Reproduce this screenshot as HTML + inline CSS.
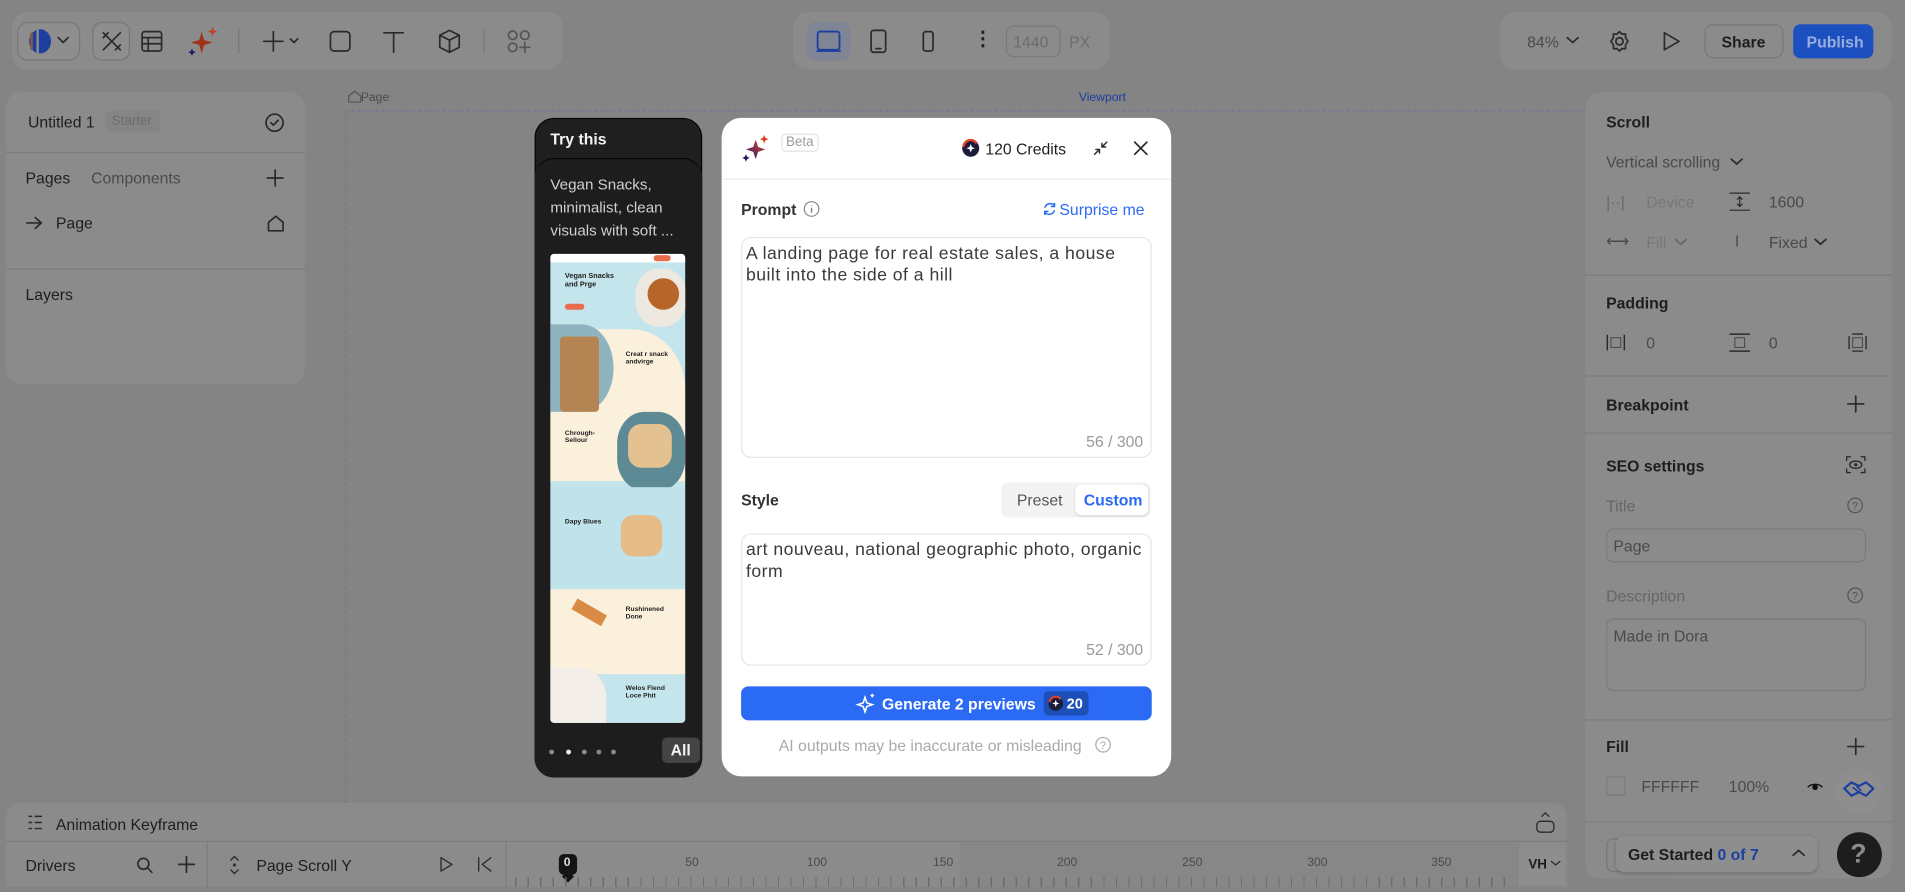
<!DOCTYPE html>
<html><head><meta charset="utf-8">
<style>
*{box-sizing:border-box;margin:0;padding:0}
html,body{width:1905px;height:892px;overflow:hidden;background:#848484;font-family:"Liberation Sans",sans-serif}
#w{position:absolute;left:0;top:0;width:1568px;height:734.2px;transform:scale(1.2149);transform-origin:0 0;background:#848484;color:#1e1e1e}
.a{position:absolute}
.pn{position:absolute;background:#8b8b8b;border-radius:12px}
.t{position:absolute;font-size:13px;white-space:nowrap}
.b{font-weight:bold}
.g{color:#4a4a4a}
.lg{color:#6c6c6c}
svg{position:absolute;overflow:visible}
.ic{fill:none;stroke:#2a2a2a;stroke-width:1.4;stroke-linecap:round;stroke-linejoin:round}
.ln{position:absolute;height:1px;background:#7c7c7c}
</style></head><body><div id="w">

<!-- top left toolbar -->
<div class="pn" style="left:10px;top:10px;width:453px;height:47px"></div>
<div class="a" style="left:14px;top:18px;width:52px;height:32px;border:1px solid #777;border-radius:9px;background:#8e8e8e"></div>
<svg style="left:22px;top:24px" width="22" height="20"><ellipse cx="11" cy="10" rx="9" ry="10" fill="#1c3fa0"/><rect x="8" y="0" width="2" height="20" fill="#8b8b8b"/><rect x="3" y="3" width="2" height="14" fill="#8b5a3a"/></svg>
<svg style="left:48px;top:31px" width="8" height="5"><path class="ic" d="M0 0l4 4 4-4"/></svg>
<div class="a" style="left:76px;top:18px;width:31px;height:32px;border:1px solid #777;border-radius:8px;background:#8e8e8e"></div>
<svg style="left:83px;top:25px" width="18" height="18"><path class="ic" d="M2 2l14 14M16 2L2 16M2 6l4-4M12 16l4-4"/></svg>
<svg style="left:116px;top:25px" width="18" height="18"><rect class="ic" x="1" y="1" width="16" height="16" rx="2"/><path class="ic" d="M1 6h16M1 11h16M6 6v11"/></svg>
<svg style="left:154px;top:22px" width="26" height="26"><path d="M12 4l2 7 7 2-7 2-2 7-2-7-7-2 7-2z" fill="#a0331a"/><path d="M21 0l1 3 3 1-3 1-1 3-1-3-3-1 3-1z" fill="#c04020"/><path d="M4 18l1 2 2 1-2 1-1 2-1-2-2-1 2-1z" fill="#1c1c60"/></svg>
<div class="a" style="left:196px;top:24px;width:1px;height:20px;background:#777"></div>
<svg style="left:216px;top:25px" width="30" height="18"><path class="ic" d="M9 1v16M1 9h16M23 7l3 3 3-3"/></svg>
<svg style="left:271px;top:25px" width="18" height="18"><rect class="ic" x="1" y="1" width="16" height="16" rx="3"/></svg>
<svg style="left:315px;top:25px" width="18" height="18"><path class="ic" d="M1 2h16M9 2v16"/></svg>
<svg style="left:360px;top:24px" width="20" height="20"><path class="ic" d="M10 1l8 4v10l-8 4-8-4V5zM2 5l8 4 8-4M10 9v10"/></svg>
<div class="a" style="left:398px;top:24px;width:1px;height:20px;background:#777"></div>
<svg style="left:418px;top:25px" width="20" height="20" opacity=".55"><circle class="ic" cx="4" cy="4" r="3.5"/><circle class="ic" cx="14" cy="4" r="3.5"/><circle class="ic" cx="4" cy="14" r="3.5"/><path class="ic" d="M14 10v8M10 14h8"/></svg>

<!-- center toolbar -->
<div class="pn" style="left:653px;top:10px;width:260px;height:47px"></div>
<div class="a" style="left:664px;top:18px;width:36px;height:32px;border-radius:8px;background:#7f8595"></div>
<svg style="left:672px;top:25px" width="20" height="18"><rect x="1" y="1" width="18" height="15" rx="2" fill="none" stroke="#1c3fa0" stroke-width="1.5"/><path d="M0 17h20" stroke="#1c3fa0" stroke-width="1.5"/></svg>
<svg style="left:716px;top:24px" width="14" height="20"><rect class="ic" x="1" y="1" width="12" height="18" rx="2"/><path class="ic" d="M5 16h4"/></svg>
<svg style="left:759px;top:25px" width="10" height="18"><rect class="ic" x="1" y="1" width="8" height="16" rx="2"/></svg>
<div class="t b" style="left:801px;top:22px;font-size:16px">⋮</div>
<div class="a" style="left:828px;top:21px;width:45px;height:26px;border:1px solid #7a7a7a;border-radius:6px"></div>
<div class="t lg" style="left:834px;top:27px">1440</div>
<div class="t lg" style="left:880px;top:27px">PX</div>

<!-- right toolbar -->
<div class="pn" style="left:1235px;top:10px;width:322px;height:47px"></div>
<div class="t g" style="left:1257px;top:27px">84%</div>
<svg style="left:1290px;top:31px" width="9" height="5"><path class="ic" d="M0 0l4.5 4 4.5-4"/></svg>
<svg style="left:1324px;top:25px" width="18" height="18"><circle class="ic" cx="9" cy="9" r="3"/><path class="ic" d="M9 1l2 2h3v3l2 3-2 3v3h-3l-2 2-2-2H4v-3L2 9l2-3V3h3z"/></svg>
<svg style="left:1369px;top:26px" width="14" height="16"><path class="ic" d="M1 1l12 7-12 7z"/></svg>
<div class="a" style="left:1403px;top:20px;width:65px;height:28px;border:1px solid #777;border-radius:7px"></div>
<div class="t b" style="left:1417px;top:27px">Share</div>
<div class="a" style="left:1476px;top:20px;width:66px;height:28px;background:#1c4fc0;border-radius:6px"></div>
<div class="t b" style="left:1487px;top:27px;color:#9aaede">Publish</div>

<!-- left panel -->
<div class="pn" style="left:5px;top:76px;width:246px;height:240px"></div>
<div class="t" style="left:23px;top:93px">Untitled 1</div>
<div class="a" style="left:87px;top:91px;width:45px;height:18px;background:#858585;border-radius:4px"></div>
<div class="t lg" style="left:92px;top:94px;font-size:11px">Starter</div>
<svg style="left:218px;top:93px" width="16" height="16"><circle class="ic" cx="8" cy="8" r="7"/><path class="ic" d="M5 8l2 2 4-4"/></svg>
<div class="ln" style="left:5px;top:125px;width:246px"></div>
<div class="t" style="left:21px;top:139px">Pages</div>
<div class="t g" style="left:75px;top:139px">Components</div>
<svg style="left:220px;top:140px" width="13" height="13"><path class="ic" d="M6.5 0v13M0 6.5h13"/></svg>
<svg style="left:22px;top:178px" width="13" height="11"><path class="ic" d="M0 5.5h12M7 1l5 4.5L7 10"/></svg>
<div class="t" style="left:46px;top:176px">Page</div>
<svg style="left:220px;top:177px" width="14" height="14"><path class="ic" d="M1 6l6-5 6 5v7H1z"/></svg>
<div class="ln" style="left:5px;top:221px;width:246px"></div>
<div class="t" style="left:21px;top:235px">Layers</div>

<!-- canvas frame -->
<svg style="left:286px;top:74px" width="12" height="11"><path class="ic" d="M1 5l5-4 5 4v5H1z" style="stroke:#555;stroke-width:1"/></svg>
<div class="t g" style="left:297px;top:75px;font-size:10px">Page</div>
<div class="t" style="left:888px;top:75px;font-size:10px;color:#1c3fa0">Viewport</div>
<div class="a" style="left:284px;top:91px;width:1022px;height:600px;border-top:1px dashed #6e7898;border-left:1px dashed #777"></div>

<!-- Try this card -->
<div class="a" style="left:440px;top:97px;width:138px;height:543px;background:#1f1f1f;border:1.5px solid #050505;border-radius:16px"></div>
<div class="t b" style="left:453px;top:107px;color:#f2f2f2">Try this</div>
<div class="a" style="left:440px;top:130px;width:138px;height:510px;border-top:1.5px solid #050505;border-radius:16px 16px 16px 16px;background:#1d1d1d"></div>
<div class="a" style="left:453px;top:143px;font-size:12.5px;line-height:19px;color:#cfcfcf;width:118px">Vegan Snacks, minimalist, clean visuals with soft ...</div>
<div class="a" style="left:453px;top:209px;width:111px;height:386px;border-radius:3px;overflow:hidden;background:#c5e5ec">
 <div class="a" style="left:0;top:0;width:111px;height:7px;background:#fff"></div>
 <div class="a" style="left:85px;top:1px;width:14px;height:5px;background:#e96a4c;border-radius:3px"></div>
 <div class="a b" style="left:12px;top:16px;font-size:6px;line-height:7px">Vegan Snacks<br>and Prge</div>
 <div class="a" style="left:12px;top:41px;width:16px;height:5px;background:#e96a4c;border-radius:3px"></div>
 <div class="a" style="left:70px;top:12px;width:42px;height:48px;background:#ede9e0;border-radius:45%"></div>
 <div class="a" style="left:80px;top:20px;width:26px;height:26px;background:#b8652a;border-radius:50%"></div>
 <div class="a" style="left:0;top:62px;width:111px;height:125px;background:#fbf0dc;border-radius:40% 40% 0 0"></div>
 <div class="a" style="left:0;top:58px;width:52px;height:72px;background:#8fb4bf;border-radius:0 50% 50% 0"></div>
 <div class="a" style="left:8px;top:68px;width:32px;height:62px;background:#b48453;border-radius:3px"></div>
 <div class="a b" style="left:62px;top:80px;font-size:5.5px;line-height:6px">Creat r snack<br>andvirge</div>
 <div class="a" style="left:55px;top:130px;width:56px;height:65px;background:#5e8a95;border-radius:40%"></div>
 <div class="a" style="left:64px;top:140px;width:36px;height:36px;background:#e3c190;border-radius:30%"></div>
 <div class="a b" style="left:12px;top:145px;font-size:5.5px;line-height:6px">Chrough-<br>Sellour</div>
 <div class="a" style="left:0;top:192px;width:111px;height:82px;background:#bfe2eb"></div>
 <div class="a b" style="left:12px;top:218px;font-size:5.5px">Dapy Blues</div>
 <div class="a" style="left:58px;top:215px;width:34px;height:34px;background:#e6bb85;border-radius:30%"></div>
 <div class="a" style="left:0;top:276px;width:111px;height:70px;background:#fbf0dc"></div>
 <div class="a" style="left:18px;top:290px;width:28px;height:10px;background:#d98a45;transform:rotate(30deg)"></div>
 <div class="a b" style="left:62px;top:290px;font-size:5.5px;line-height:6px">Rushinened<br>Done</div>
 <div class="a" style="left:0;top:346px;width:111px;height:40px;background:#c5e5ec"></div>
 <div class="a" style="left:0;top:340px;width:46px;height:50px;background:#f3efe8;border-radius:0 50% 0 0"></div>
 <div class="a b" style="left:62px;top:355px;font-size:5.5px;line-height:6px">Welos Flend<br>Loce Phit</div>
</div>
<div class="a" style="left:452px;top:617px;width:4px;height:4px;border-radius:2px;background:#888"></div>
<div class="a" style="left:466px;top:617px;width:4px;height:4px;border-radius:2px;background:#eee"></div>
<div class="a" style="left:479px;top:617px;width:4px;height:4px;border-radius:2px;background:#888"></div>
<div class="a" style="left:491px;top:617px;width:4px;height:4px;border-radius:2px;background:#888"></div>
<div class="a" style="left:503px;top:617px;width:4px;height:4px;border-radius:2px;background:#888"></div>
<div class="a" style="left:545px;top:607px;width:31px;height:21px;background:#444;border-radius:4px"></div>
<div class="t b" style="left:552px;top:610px;color:#f2f2f2;font-size:13px">All</div>

<!-- modal -->
<div class="a" style="left:594px;top:97px;width:370px;height:542px;background:#fff;border-radius:16px"></div>
<svg style="left:610px;top:110px" width="26" height="26"><defs><linearGradient id="sg" x1="1" y1="0" x2="0" y2="1"><stop offset="0" stop-color="#e0442a"/><stop offset="1" stop-color="#2a1a6a"/></linearGradient></defs><path d="M12 5l2 6 6 2-6 2-2 6-2-6-6-2 6-2z" fill="url(#sg)"/><path d="M19 1l1 2.5 2.5 1-2.5 1-1 2.5-1-2.5-2.5-1 2.5-1z" fill="#d94020"/><path d="M4 17l1 2 2 1-2 1-1 2-1-2-2-1 2-1z" fill="#1c1c60"/></svg>
<div class="a" style="left:643px;top:110px;width:31px;height:15px;border:1px solid #e3e3e3;border-radius:4px"></div>
<div class="t" style="left:647px;top:111px;font-size:11px;color:#9a9a9a">Beta</div>
<svg style="left:792px;top:115px" width="14" height="14"><circle cx="7" cy="7" r="7" fill="#1b1b3a"/><path d="M1 6a6 6 0 0 1 11-3" stroke="#e0442a" stroke-width="2" fill="none"/><path d="M7 3.5l1 2.5 2.5 1-2.5 1-1 2.5-1-2.5-2.5-1 2.5-1z" fill="#fff"/></svg>
<div class="t" style="left:811px;top:115px;color:#222">120 Credits</div>
<svg style="left:900px;top:116px" width="12" height="12"><path class="ic" style="stroke-width:1.2" d="M1 11l4-4M2 7h3v3M11 1L7 5M7 2v3h3"/></svg>
<svg style="left:934px;top:117px" width="10" height="10"><path class="ic" style="stroke-width:1.4" d="M0 0l10 10M10 0L0 10"/></svg>
<div class="a" style="left:594px;top:147px;width:370px;height:1px;background:#eee"></div>
<div class="t b" style="left:610px;top:165px;color:#333">Prompt</div>
<svg style="left:661px;top:165px" width="14" height="14"><circle cx="7" cy="7" r="6" fill="none" stroke="#888" stroke-width="1"/><path d="M7 6v4M7 4v.5" stroke="#888" stroke-width="1.2"/></svg>
<svg style="left:858px;top:166px" width="12" height="12"><path d="M2 5a4.5 4.5 0 0 1 8-1.5M10 7a4.5 4.5 0 0 1-8 1.5M10 1v3H7M2 11V8h3" stroke="#2a6af5" stroke-width="1.2" fill="none"/></svg>
<div class="t" style="left:872px;top:165px;color:#2a6af5">Surprise me</div>
<div class="a" style="left:610px;top:195px;width:338px;height:182px;border:1px solid #e5e5e5;border-radius:8px"></div>
<div class="a" style="left:614px;top:200px;font-size:14.5px;line-height:18px;color:#3a3a3a;width:330px;letter-spacing:.4px">A landing page for real estate sales, a house built into the side of a hill</div>
<div class="t" style="left:894px;top:356px;color:#999">56 / 300</div>
<div class="t b" style="left:610px;top:404px;color:#333">Style</div>
<div class="a" style="left:824px;top:397px;width:123px;height:29px;background:#f3f3f3;border-radius:6px"></div>
<div class="a" style="left:885px;top:399px;width:60px;height:25px;background:#fff;border-radius:5px;box-shadow:0 1px 2px rgba(0,0,0,.12)"></div>
<div class="t" style="left:837px;top:404px;color:#555">Preset</div>
<div class="t b" style="left:892px;top:404px;color:#2a6af5">Custom</div>
<div class="a" style="left:610px;top:439px;width:338px;height:109px;border:1px solid #e5e5e5;border-radius:8px"></div>
<div class="a" style="left:614px;top:444px;font-size:14.5px;line-height:18px;color:#3a3a3a;width:332px;letter-spacing:.4px">art nouveau, national geographic photo, organic form</div>
<div class="t" style="left:894px;top:527px;color:#999">52 / 300</div>
<div class="a" style="left:610px;top:565px;width:338px;height:28px;background:#2a6af5;border-radius:6px"></div>
<svg style="left:705px;top:571px" width="16" height="16"><path d="M7 3l1.5 4.5L13 9l-4.5 1.5L7 15l-1.5-4.5L1 9l4.5-1.5z" fill="none" stroke="#fff" stroke-width="1.3"/><path d="M13 0v3M11.5 1.5h3" stroke="#fff" stroke-width="1.2"/></svg>
<div class="t b" style="left:726px;top:572px;color:#fff">Generate 2 previews</div>
<div class="a" style="left:859px;top:569px;width:37px;height:20px;background:#1d4fb8;border-radius:4px"></div>
<svg style="left:863px;top:573px" width="12" height="12"><circle cx="6" cy="6" r="6" fill="#1b1b3a"/><path d="M1 5a5 5 0 0 1 9-2.5" stroke="#e0442a" stroke-width="1.8" fill="none"/><path d="M6 3l.8 2.2 2.2.8-2.2.8L6 9l-.8-2.2L3 6l2.2-.8z" fill="#fff"/></svg>
<div class="t b" style="left:878px;top:572px;color:#fff;font-size:12px">20</div>
<div class="t" style="left:641px;top:606px;color:#aaa">AI outputs may be inaccurate or misleading</div>
<svg style="left:901px;top:606px" width="14" height="14"><circle cx="7" cy="7" r="6" fill="none" stroke="#aaa" stroke-width="1"/><text x="4.3" y="10.5" font-size="9" fill="#aaa" font-family="Liberation Sans">?</text></svg>

<!-- right panel -->
<div class="pn" style="left:1305px;top:76px;width:252px;height:647px;border-radius:12px 12px 12px 12px"></div>
<div class="t b" style="left:1322px;top:93px">Scroll</div>
<div class="t g" style="left:1322px;top:126px">Vertical scrolling</div>
<svg style="left:1425px;top:131px" width="9" height="5"><path class="ic" d="M0 0l4.5 4 4.5-4"/></svg>
<div class="t lg" style="left:1322px;top:159px;color:#666">|··|</div>
<div class="t lg" style="left:1355px;top:159px;color:#777">Device</div>
<svg style="left:1424px;top:158px" width="16" height="16"><path class="ic" d="M0 1h16M0 15h16M8 4v8M6 6l2-2 2 2M6 10l2 2 2-2" style="stroke-width:1"/></svg>
<div class="t g" style="left:1456px;top:159px">1600</div>
<div class="t g" style="left:1322px;top:191px">⟷</div>
<div class="t" style="left:1355px;top:192px;color:#777">Fill</div>
<svg style="left:1379px;top:197px" width="9" height="5"><path class="ic" d="M0 0l4.5 4 4.5-4" style="stroke:#666"/></svg>
<div class="t g" style="left:1428px;top:191px">I</div>
<div class="t g" style="left:1456px;top:192px">Fixed</div>
<svg style="left:1494px;top:197px" width="9" height="5"><path class="ic" d="M0 0l4.5 4 4.5-4"/></svg>
<div class="ln" style="left:1305px;top:226px;width:252px"></div>
<div class="t b" style="left:1322px;top:242px">Padding</div>
<svg style="left:1322px;top:275px" width="16" height="14"><path class="ic" d="M1 1v12M15 1v12" style="stroke-width:1.2"/><rect x="4" y="3" width="8" height="8" fill="none" stroke="#444" stroke-width=".8"/></svg>
<div class="t g" style="left:1355px;top:275px">0</div>
<svg style="left:1424px;top:274px" width="16" height="16"><path class="ic" d="M0 1h16M0 15h16" style="stroke-width:1.2"/><rect x="4" y="4" width="8" height="8" fill="none" stroke="#444" stroke-width=".8"/></svg>
<div class="t g" style="left:1456px;top:275px">0</div>
<svg style="left:1521px;top:274px" width="16" height="16"><path class="ic" d="M1 3v10M15 3v10M4 1h8M4 15h8" style="stroke-width:1.1"/><rect x="4" y="4" width="8" height="8" fill="none" stroke="#444" stroke-width=".8"/></svg>
<div class="ln" style="left:1305px;top:309px;width:252px"></div>
<div class="t b" style="left:1322px;top:326px">Breakpoint</div>
<svg style="left:1521px;top:326px" width="13" height="13"><path class="ic" d="M6.5 0v13M0 6.5h13"/></svg>
<div class="ln" style="left:1305px;top:356px;width:252px"></div>
<div class="t b" style="left:1322px;top:376px">SEO settings</div>
<svg style="left:1519px;top:375px" width="17" height="15"><path class="ic" d="M1 4V1h3M13 1h3v3M16 11v3h-3M4 14H1v-3" style="stroke-width:1.1"/><ellipse cx="8.5" cy="7.5" rx="5" ry="3" fill="none" stroke="#2a2a2a" stroke-width="1.1"/><circle cx="8.5" cy="7.5" r="1.3" fill="#2a2a2a"/></svg>
<div class="t" style="left:1322px;top:409px;color:#666">Title</div>
<svg style="left:1520px;top:409px" width="14" height="14"><circle cx="7" cy="7" r="6" fill="none" stroke="#555" stroke-width="1"/><text x="4.3" y="10.5" font-size="9" fill="#555" font-family="Liberation Sans">?</text></svg>
<div class="a" style="left:1322px;top:435px;width:214px;height:28px;border:1px solid #7a7a7a;border-radius:6px"></div>
<div class="t g" style="left:1328px;top:442px">Page</div>
<div class="t" style="left:1322px;top:483px;color:#666">Description</div>
<svg style="left:1520px;top:483px" width="14" height="14"><circle cx="7" cy="7" r="6" fill="none" stroke="#555" stroke-width="1"/><text x="4.3" y="10.5" font-size="9" fill="#555" font-family="Liberation Sans">?</text></svg>
<div class="a" style="left:1322px;top:509px;width:214px;height:60px;border:1px solid #7a7a7a;border-radius:6px"></div>
<div class="t g" style="left:1328px;top:516px">Made in Dora</div>
<div class="ln" style="left:1305px;top:592px;width:252px"></div>
<div class="t b" style="left:1322px;top:607px">Fill</div>
<svg style="left:1521px;top:608px" width="13" height="13"><path class="ic" d="M6.5 0v13M0 6.5h13"/></svg>
<div class="a" style="left:1322px;top:639px;width:16px;height:16px;border:1px solid #7a7a7a;border-radius:2px"></div>
<div class="t g" style="left:1351px;top:640px">FFFFFF</div>
<div class="t g" style="left:1423px;top:640px">100%</div>
<svg style="left:1487px;top:642px" width="14" height="10"><path d="M1 6a7 5 0 0 1 12 0" fill="none" stroke="#111" stroke-width="1.2"/><circle cx="7" cy="6" r="2.3" fill="#111"/></svg>
<div class="a" style="left:1511px;top:632px;width:38px;height:38px;border-radius:19px;background:#8e8e8e"></div>
<svg style="left:1517px;top:642px" width="26" height="16"><path d="M1 7l6-5 6 3 6-3 6 5-6 6-6-3-6 3z" fill="none" stroke="#1c3fa0" stroke-width="1.8" stroke-linejoin="round"/><path d="M8 6l5 4M11 5l4 4" stroke="#1c3fa0" stroke-width="1.4"/></svg>
<div class="ln" style="left:1305px;top:676px;width:252px"></div>
<div class="a" style="left:1322px;top:690px;width:60px;height:28px;border:1px solid #777;border-radius:6px"></div>
<div class="a" style="left:1330px;top:688px;width:166px;height:30px;background:#8e8e8e;border-radius:7px;box-shadow:0 1px 3px rgba(0,0,0,.2)"></div>
<div class="t b" style="left:1340px;top:696px">Get Started <span style="color:#1c3fa0">0 of 7</span></div>
<svg style="left:1476px;top:699px" width="9" height="5"><path class="ic" d="M0 5l4.5-4 4.5 4"/></svg>
<div class="a" style="left:1512px;top:685px;width:37px;height:37px;border-radius:19px;background:#1d1d1d"></div>
<div class="t b" style="left:1523px;top:690px;color:#8b8b8b;font-size:22px">?</div>

<!-- bottom panel -->
<div class="pn" style="left:5px;top:661px;width:1285px;height:69px;border-radius:12px 12px 0 0"></div>
<svg style="left:23px;top:671px" width="12" height="12"><path class="ic" d="M1 1h2M1 6h2M1 11h2M6 1h5M6 6h5M6 11h5" style="stroke-width:1.2"/></svg>
<div class="t" style="left:46px;top:671px">Animation Keyframe</div>
<svg style="left:1264px;top:668px" width="16" height="18"><path class="ic" d="M5 4l3-3 3 3" style="stroke-width:1"/><rect class="ic" x="1" y="8" width="14" height="9" rx="3" style="stroke-width:1.1"/></svg>
<div class="ln" style="left:5px;top:692px;width:1285px"></div>
<div class="t" style="left:21px;top:705px">Drivers</div>
<svg style="left:112px;top:705px" width="14" height="14"><circle class="ic" cx="6" cy="6" r="4.5"/><path class="ic" d="M9.5 9.5L13 13"/></svg>
<svg style="left:147px;top:705px" width="13" height="13"><path class="ic" d="M6.5 0v13M0 6.5h13"/></svg>
<div class="a" style="left:170px;top:693px;width:1px;height:37px;background:#7c7c7c"></div>
<svg style="left:188px;top:703px" width="10" height="18"><path class="ic" d="M2 5l3-3 3 3M2 13l3 3 3-3" style="stroke-width:1.1"/><circle cx="5" cy="9" r="1.3" fill="#333"/></svg>
<div class="t" style="left:211px;top:705px">Page Scroll Y</div>
<svg style="left:362px;top:705px" width="11" height="13"><path class="ic" d="M1 1l9 5.5L1 12z" style="stroke-width:1.1"/></svg>
<svg style="left:393px;top:705px" width="12" height="13"><path class="ic" d="M1 1v11M11 1L4 6.5 11 12" style="stroke-width:1.1"/></svg>
<div class="a" style="left:416px;top:693px;width:1px;height:37px;background:#7c7c7c"></div>
<div class="a" style="left:790px;top:693px;width:460px;height:37px;background:#878787"></div>
<div class="a" style="left:460px;top:703px;width:15px;height:17px;background:#141414;border-radius:4px"></div>
<div class="a" style="left:464px;top:718px;width:7px;height:7px;background:#141414;transform:rotate(45deg)"></div>
<div class="t b" style="left:464px;top:705px;color:#ddd;font-size:10px">0</div>
<div class="t g" style="left:564px;top:705px;font-size:10px">50</div>
<div class="t g" style="left:664px;top:705px;font-size:10px">100</div>
<div class="t g" style="left:768px;top:705px;font-size:10px">150</div>
<div class="t g" style="left:870px;top:705px;font-size:10px">200</div>
<div class="t g" style="left:973px;top:705px;font-size:10px">250</div>
<div class="t g" style="left:1076px;top:705px;font-size:10px">300</div>
<div class="t g" style="left:1178px;top:705px;font-size:10px">350</div>
<div class="a" style="left:424px;top:722px;width:824px;height:8px;background:repeating-linear-gradient(90deg,#6c6c6c 0 1px,transparent 1px 10.3px)"></div>
<div class="a" style="left:1250px;top:698px;width:38px;height:30px;background:#8e8e8e"></div>
<div class="t b" style="left:1258px;top:706px;font-size:11px">VH</div>
<svg style="left:1277px;top:709px" width="7" height="4"><path class="ic" d="M0 0l3.5 3 3.5-3" style="stroke-width:1"/></svg>

</div></body></html>
